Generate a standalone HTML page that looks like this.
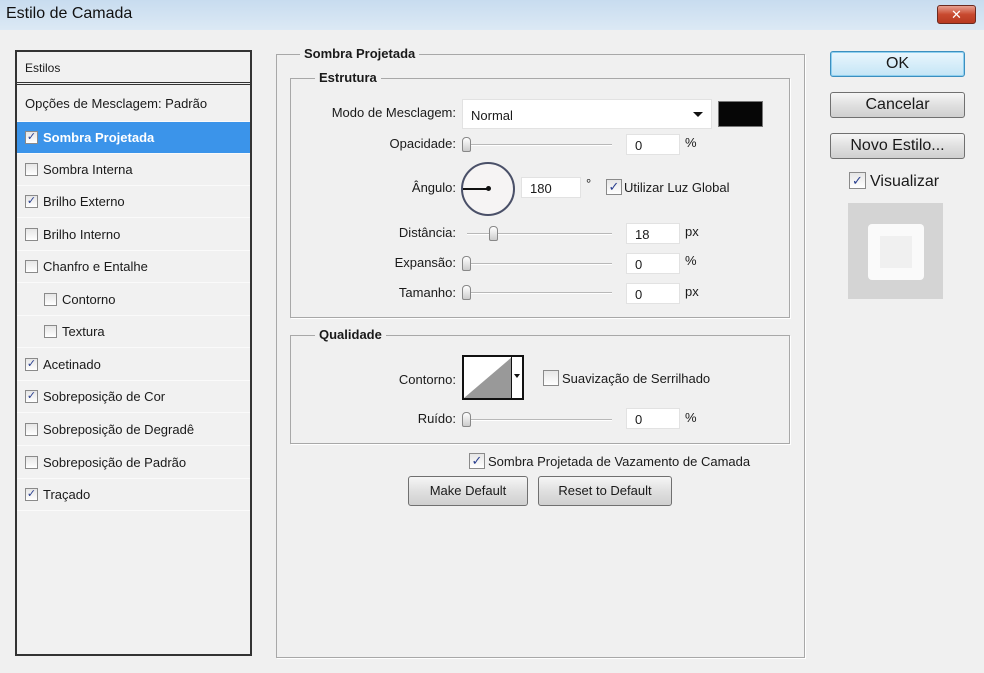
<!DOCTYPE html>
<html><head><meta charset="utf-8"><style>
*{box-sizing:border-box;margin:0;padding:0}
body{width:984px;height:673px;background:#f0f0f0;font-family:"Liberation Sans","DejaVu Sans",sans-serif;font-size:13px;color:#1a1a1a;position:relative;overflow:hidden}
.a{position:absolute}
.title{left:0;top:0;width:984px;height:30px;background:linear-gradient(#c8dcef,#dce9f5);}
.title span{position:absolute;left:6px;top:5px;font-size:16px;color:#111}
.close{left:937px;top:5px;width:39px;height:19px;border:1px solid #6b2a20;border-radius:3px;background:linear-gradient(#e8a090,#c8492f 50%,#b83a22);color:#fff;font-weight:bold;text-align:center;font-size:13px;line-height:17px}
.left{left:15px;top:50px;width:237px;height:606px;border:2px solid #333;background:#f1f1f1}
.row{position:absolute;left:0;width:233px;height:32px;border-bottom:1px solid #fafafa;padding-left:8px;line-height:31px;font-size:13px}
.cb{display:inline-block;width:13px;height:13px;border:1px solid #8a8a8a;background:linear-gradient(#e6e6e6,#fff);vertical-align:middle;margin-top:-3px;margin-right:5px;position:relative;font-size:11px;line-height:11px;text-align:center;color:#2a3f8f;font-weight:bold}
.sel{background:#3b94ea;color:#fff;font-weight:bold}
.grp{border:1px solid #a8a8a8;box-shadow:1px 1px 0 #fff}
.leg{position:absolute;background:#f0f0f0;font-weight:bold;padding:0 4px}
.lbl{position:absolute;text-align:right;font-size:13px}
.inp{position:absolute;background:#fff;height:21px;border:1px solid #e2e2e2;font-size:13px;padding:3px 8px}
.sl{position:absolute;height:2px;background:#b8b8b8;border-bottom:1px solid #fff}
.th{position:absolute;width:9px;height:15px;border:1px solid #888;border-radius:4px 4px 2px 2px;background:linear-gradient(#fff,#ccc)}
.btn{position:absolute;border:1px solid #707070;border-radius:3px;background:linear-gradient(#f6f6f6,#e0e0e0 50%,#cfcfcf);text-align:center;font-size:13px}
</style></head><body>
<div class="a title"><span>Estilo de Camada</span></div>
<div class="a close">✕</div>

<div class="a left">
 <div class="row" style="top:0;height:33px;border-bottom:3px double #333;line-height:32px;font-size:12px">Estilos</div>
 <div class="row" style="top:37px;height:33px;line-height:30px">Opções de Mesclagem: Padrão</div>
 <div class="row sel" style="top:70px"><span class="cb">✓</span>Sombra Projetada</div>
 <div class="row" style="top:102px"><span class="cb"></span>Sombra Interna</div>
 <div class="row" style="top:134px"><span class="cb">✓</span>Brilho Externo</div>
 <div class="row" style="top:167px"><span class="cb"></span>Brilho Interno</div>
 <div class="row" style="top:199px"><span class="cb"></span>Chanfro e Entalhe</div>
 <div class="row" style="top:232px;padding-left:27px"><span class="cb"></span>Contorno</div>
 <div class="row" style="top:264px;padding-left:27px"><span class="cb"></span>Textura</div>
 <div class="row" style="top:297px"><span class="cb">✓</span>Acetinado</div>
 <div class="row" style="top:329px"><span class="cb">✓</span>Sobreposição de Cor</div>
 <div class="row" style="top:362px"><span class="cb"></span>Sobreposição de Degradê</div>
 <div class="row" style="top:395px"><span class="cb"></span>Sobreposição de Padrão</div>
 <div class="row" style="top:427px"><span class="cb">✓</span>Traçado</div>
</div>

<div class="a grp" style="left:276px;top:54px;width:529px;height:604px"></div>
<div class="leg" style="left:300px;top:46px">Sombra Projetada</div>
<div class="a grp" style="left:290px;top:78px;width:500px;height:240px"></div>
<div class="leg" style="left:315px;top:70px">Estrutura</div>

<div class="lbl" style="right:528px;top:105px">Modo de Mesclagem:</div>
<div class="inp" style="left:462px;top:99px;width:250px;height:30px;padding-top:8px">Normal<span style="position:absolute;right:8px;top:12px;border-left:5px solid transparent;border-right:5px solid transparent;border-top:5px solid #111"></span></div>
<div class="a" style="left:718px;top:101px;width:45px;height:26px;background:#060606;border:1px solid #777"></div>

<div class="lbl" style="right:528px;top:136px">Opacidade:</div>
<div class="sl" style="left:462px;top:144px;width:150px"></div><div class="th" style="left:462px;top:137px"></div>
<div class="inp" style="left:626px;top:134px;width:54px">0</div><div class="lbl" style="left:685px;top:135px">%</div>

<div class="lbl" style="right:528px;top:180px">Ângulo:</div>
<div class="a" style="left:461px;top:162px;width:54px;height:54px;border:2px solid #4a5068;border-radius:50%;background:#f6f4f4"></div>
<div class="a" style="left:463px;top:188px;width:26px;height:2px;background:#111"></div>
<div class="a" style="left:486px;top:186px;width:5px;height:5px;border-radius:50%;background:#111"></div>
<div class="inp" style="left:521px;top:177px;width:60px">180</div><div class="lbl" style="left:586px;top:176px">°</div>
<div class="lbl" style="left:606px;top:180px"><span class="cb" style="width:16px;height:16px;font-size:13px;line-height:14px;margin-right:2px">✓</span>Utilizar Luz Global</div>

<div class="lbl" style="right:528px;top:225px">Distância:</div>
<div class="sl" style="left:467px;top:233px;width:145px"></div><div class="th" style="left:489px;top:226px"></div>
<div class="inp" style="left:626px;top:223px;width:54px">18</div><div class="lbl" style="left:685px;top:224px">px</div>

<div class="lbl" style="right:528px;top:255px">Expansão:</div>
<div class="sl" style="left:462px;top:263px;width:150px"></div><div class="th" style="left:462px;top:256px"></div>
<div class="inp" style="left:626px;top:253px;width:54px">0</div><div class="lbl" style="left:685px;top:253px">%</div>

<div class="lbl" style="right:528px;top:285px">Tamanho:</div>
<div class="sl" style="left:462px;top:292px;width:150px"></div><div class="th" style="left:462px;top:285px"></div>
<div class="inp" style="left:626px;top:283px;width:54px">0</div><div class="lbl" style="left:685px;top:284px">px</div>

<div class="a grp" style="left:290px;top:335px;width:500px;height:109px"></div>
<div class="leg" style="left:315px;top:327px">Qualidade</div>
<div class="lbl" style="right:528px;top:372px">Contorno:</div>
<div class="a" style="left:462px;top:355px;width:62px;height:45px;border:2px solid #111;background:#fff">
 <svg width="48" height="41" style="position:absolute;left:0;top:0"><polygon points="0,41 48,0 48,41" fill="#999"/></svg>
 <div style="position:absolute;left:47px;top:0;width:1px;height:41px;background:#111"></div>
 <div style="position:absolute;left:50px;top:17px;border-left:3px solid transparent;border-right:3px solid transparent;border-top:4px solid #111"></div>
</div>
<div class="lbl" style="left:543px;top:371px"><span class="cb" style="width:16px;height:16px;margin-right:3px"></span>Suavização de Serrilhado</div>
<div class="lbl" style="right:528px;top:411px">Ruído:</div>
<div class="sl" style="left:462px;top:419px;width:150px"></div><div class="th" style="left:462px;top:412px"></div>
<div class="inp" style="left:626px;top:408px;width:54px">0</div><div class="lbl" style="left:685px;top:410px">%</div>

<div class="lbl" style="left:469px;top:454px"><span class="cb" style="width:16px;height:16px;font-size:13px;line-height:14px;margin-right:3px">✓</span>Sombra Projetada de Vazamento de Camada</div>
<div class="btn" style="left:408px;top:476px;width:120px;height:30px;line-height:28px">Make Default</div>
<div class="btn" style="left:538px;top:476px;width:134px;height:30px;line-height:28px">Reset to Default</div>

<div class="btn" style="left:830px;top:51px;width:135px;height:26px;line-height:24px;font-size:16px;border-color:#3c8fbf;background:linear-gradient(#eaf6fd,#c4e5f6);box-shadow:inset 0 0 0 1px #8fd0f0">OK</div>
<div class="btn" style="left:830px;top:92px;width:135px;height:26px;line-height:24px;font-size:16px">Cancelar</div>
<div class="btn" style="left:830px;top:133px;width:135px;height:26px;line-height:24px;font-size:16px">Novo Estilo...</div>
<div class="lbl" style="left:849px;top:173px;font-size:16px"><span class="cb" style="width:17px;height:17px;font-size:13px;line-height:15px;margin-right:4px">✓</span>Visualizar</div>
<div class="a" style="left:848px;top:203px;width:95px;height:96px;background:#d4d4d4"></div>
<div class="a" style="left:868px;top:224px;width:56px;height:56px;background:#fafafa;border-radius:4px"></div>
<div class="a" style="left:880px;top:236px;width:32px;height:32px;background:#f0f0f0"></div>
</body></html>
